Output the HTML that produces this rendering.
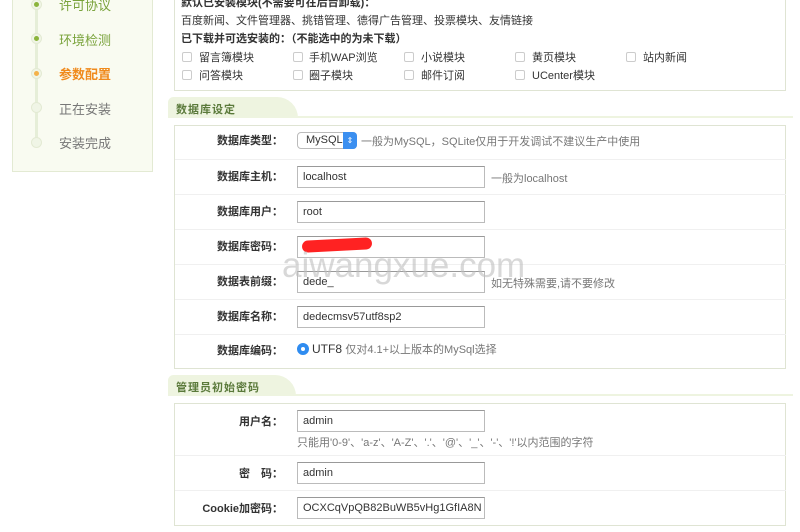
<!DOCTYPE html>
<html><head><meta charset="utf-8"><style>
*{margin:0;padding:0;box-sizing:border-box}
body{width:800px;height:532px;overflow:hidden;background:#fff;font-family:"Liberation Sans","Noto Sans CJK SC",sans-serif;font-size:11px;color:#333;position:relative}
.a{position:absolute}
.side{left:12px;top:-10px;width:141px;height:182px;background:#f9fbf1;border:1px solid #e3ead3}
.vline{left:35px;top:0;width:3px;height:145px;background:#e6eed8}
.dot{width:11px;height:11px;border-radius:50%;background:#f0f5e6;border:1px solid #e3ead3}
.dot i{position:absolute;left:2px;top:2px;width:5px;height:5px;border-radius:50%}
.step{left:59px;font-size:13px}
.box{border:1px solid #dfe4d3;background:#fff}
.hdr{left:168px;height:21px;width:625px;border-bottom:2px solid #eef4e0}
.tab{position:absolute;left:0;top:0;height:21px;width:130px;background:#eef4e0;border-radius:8px 30px 0 0;font-weight:bold;color:#5b7a3b;font-size:11px;padding:4px 0 0 8px;letter-spacing:1px}
.lbl{font-weight:bold;font-size:11px;color:#333;text-align:right;width:130px;left:153px}
.in{left:297px;width:188px;height:22px;border:1px solid #bbb;border-top-color:#999;background:#fff;padding:0 5px;line-height:20px;font-size:11px}
.row{left:175px;width:611px;height:1px;background:#f0f0f0}
.hint{color:#777;font-size:11px}
.cb{width:10px;height:10px;border:1px solid #ccc;border-radius:2px;background:#fff}
</style></head><body>
<div class="a side"></div>
<div class="a vline"></div>
<div class="a dot" style="left:31px;top:-1px"><i style="background:#8bb43c"></i></div>
<div class="a dot" style="left:31px;top:33px"><i style="background:#8bb43c"></i></div>
<div class="a dot" style="left:31px;top:68px"><i style="background:#f4b24a"></i></div>
<div class="a dot" style="left:31px;top:102px"></div>
<div class="a dot" style="left:31px;top:137px"></div>
<div class="a step" style="top:-5px;color:#7aa33c">许可协议</div>
<div class="a step" style="top:30px;color:#7aa33c">环境检测</div>
<div class="a step" style="top:64px;color:#f08a1c;font-weight:bold">参数配置</div>
<div class="a step" style="top:99px;color:#777">正在安装</div>
<div class="a step" style="top:133px;color:#777">安装完成</div>

<div class="a box" style="left:174px;top:-10px;width:612px;height:101px"></div>
<div class="a" style="left:181px;top:-6px;font-weight:bold">默认已安装模块(不需要可在后台卸载)：</div>
<div class="a" style="left:181px;top:12px">百度新闻、文件管理器、挑错管理、德得广告管理、投票模块、友情链接</div>
<div class="a" style="left:181px;top:30px;font-weight:bold">已下载并可选安装的：（不能选中的为未下载）</div>
<div class="a cb" style="left:182px;top:52px"></div><div class="a" style="left:199px;top:49px">留言簿模块</div>
<div class="a cb" style="left:293px;top:52px"></div><div class="a" style="left:309px;top:49px">手机WAP浏览</div>
<div class="a cb" style="left:404px;top:52px"></div><div class="a" style="left:421px;top:49px">小说模块</div>
<div class="a cb" style="left:515px;top:52px"></div><div class="a" style="left:532px;top:49px">黄页模块</div>
<div class="a cb" style="left:626px;top:52px"></div><div class="a" style="left:643px;top:49px">站内新闻</div>
<div class="a cb" style="left:182px;top:70px"></div><div class="a" style="left:199px;top:67px">问答模块</div>
<div class="a cb" style="left:293px;top:70px"></div><div class="a" style="left:309px;top:67px">圈子模块</div>
<div class="a cb" style="left:404px;top:70px"></div><div class="a" style="left:421px;top:67px">邮件订阅</div>
<div class="a cb" style="left:515px;top:70px"></div><div class="a" style="left:532px;top:67px">UCenter模块</div>

<div class="a hdr" style="top:97px"><div class="tab">数据库设定</div></div>
<div class="a box" style="left:174px;top:125px;width:612px;height:244px"></div>
<div class="a row" style="top:159px"></div><div class="a row" style="top:194px"></div><div class="a row" style="top:229px"></div><div class="a row" style="top:264px"></div><div class="a row" style="top:299px"></div><div class="a row" style="top:334px"></div>

<div class="a lbl" style="top:132px">数据库类型：</div>
<div class="a" style="left:297px;top:132px;width:60px;height:17px;border:1px solid #bbb;border-radius:4px;background:#fff;padding:0 0 0 8px;line-height:15px">MySQL</div>
<div class="a" style="left:343px;top:132px;width:14px;height:17px;background:#3b8ff0;border-radius:0 4px 4px 0;color:#fff;font-size:8px;text-align:center;line-height:17px">⇕</div>
<div class="a hint" style="left:361px;top:133px">一般为MySQL，SQLite仅用于开发调试不建议生产中使用</div>

<div class="a lbl" style="top:168px">数据库主机：</div><div class="a in" style="top:166px">localhost</div><div class="a hint" style="left:491px;top:170px">一般为localhost</div>
<div class="a lbl" style="top:203px">数据库用户：</div><div class="a in" style="top:201px">root</div>
<div class="a lbl" style="top:238px">数据库密码：</div><div class="a in" style="top:236px"></div>
<div class="a" style="left:302px;top:239px;width:70px;height:12px;background:#f22;border-radius:6px;transform:rotate(-3deg)"></div>
<div class="a lbl" style="top:273px">数据表前缀：</div><div class="a in" style="top:271px">dede_</div><div class="a hint" style="left:491px;top:275px">如无特殊需要,请不要修改</div>
<div class="a lbl" style="top:308px">数据库名称：</div><div class="a in" style="top:306px">dedecmsv57utf8sp2</div>
<div class="a lbl" style="top:342px">数据库编码：</div>
<div class="a" style="left:297px;top:343px;width:12px;height:12px;border-radius:50%;background:#2f8cf0;border:3px solid #2f8cf0"><div style="width:4px;height:4px;background:#fff;border-radius:50%;margin:1px"></div></div>
<div class="a" style="left:312px;top:341px;font-size:12px">UTF8 <span style="color:#777;font-size:11px">仅对4.1+以上版本的MySql选择</span></div>

<div class="a" style="left:282px;top:246px;font-size:35px;color:rgba(190,190,190,0.6)">aiwangxue.com</div>

<div class="a hdr" style="top:375px"><div class="tab" style="width:128px">管理员初始密码</div></div>
<div class="a box" style="left:174px;top:403px;width:612px;height:123px"></div>
<div class="a row" style="top:455px"></div><div class="a row" style="top:490px"></div>
<div class="a lbl" style="top:413px">用户名：</div><div class="a in" style="top:410px">admin</div>
<div class="a hint" style="left:297px;top:434px">只能用'0-9'、'a-z'、'A-Z'、'.'、'@'、'_'、'-'、'!'以内范围的字符</div>
<div class="a lbl" style="top:465px">密　码：</div><div class="a in" style="top:462px">admin</div>
<div class="a lbl" style="top:500px">Cookie加密码：</div><div class="a in" style="top:497px">OCXCqVpQB82BuWB5vHg1GfIA8N</div>
</body></html>
